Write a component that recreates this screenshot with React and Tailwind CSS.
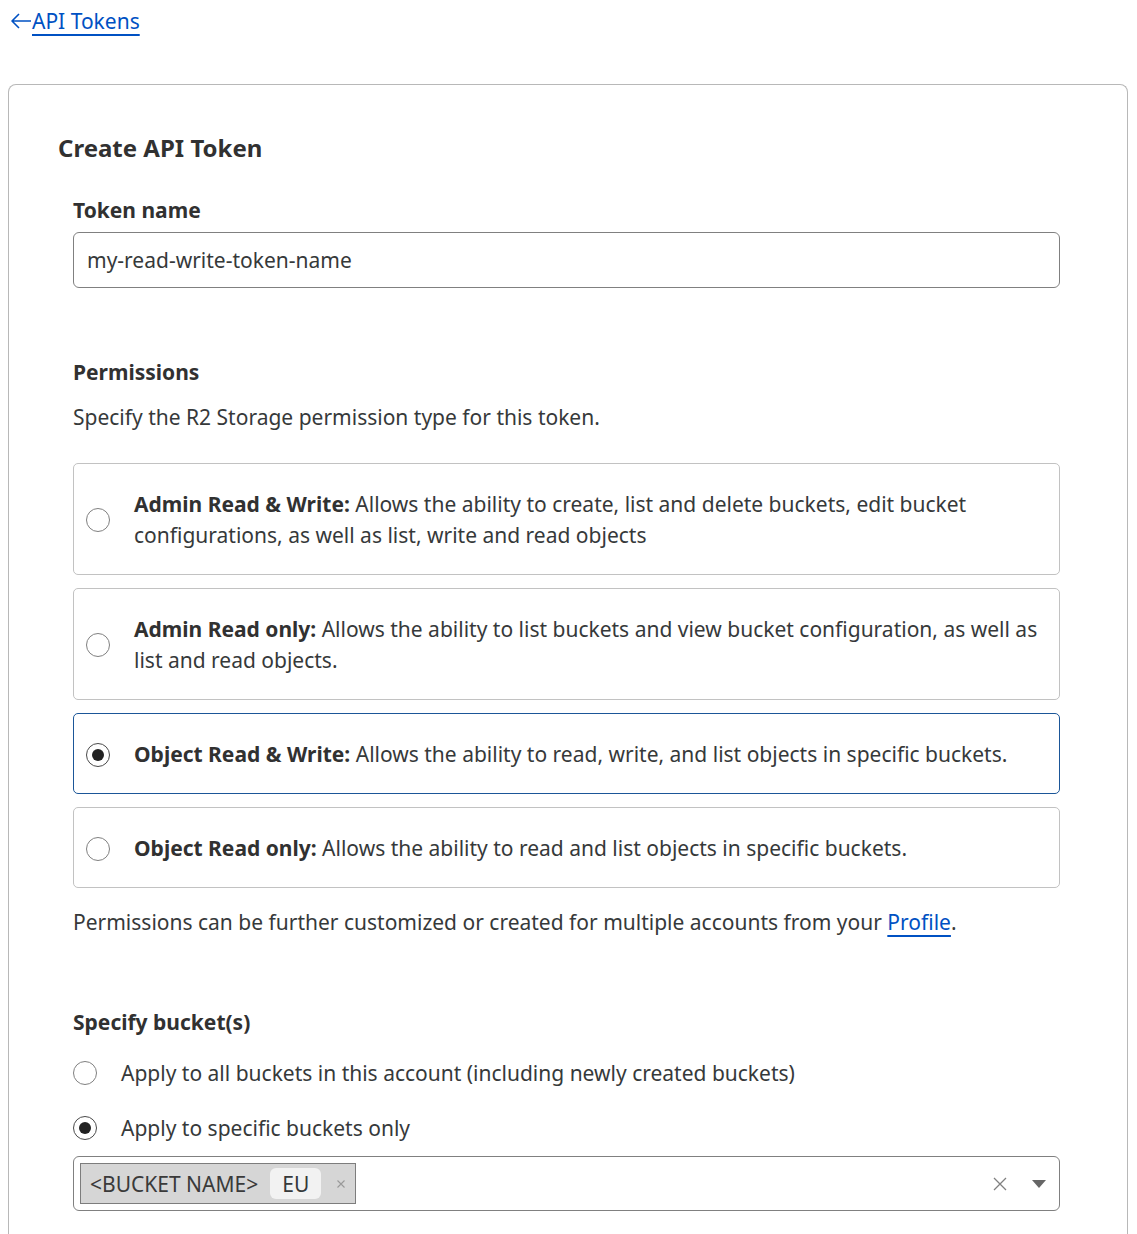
import React, { useState } from 'react'

const options = [
  { id: 'admin-rw', title: 'Admin Read & Write:', desc: 'Allows the ability to create, list and delete buckets, edit bucket configurations, as well as list, write and read objects' },
  { id: 'admin-r', title: 'Admin Read only:', desc: 'Allows the ability to list buckets and view bucket configuration, as well as list and read objects.' },
  { id: 'obj-rw', title: 'Object Read & Write:', desc: 'Allows the ability to read, write, and list objects in specific buckets.' },
  { id: 'obj-r', title: 'Object Read only:', desc: 'Allows the ability to read and list objects in specific buckets.' },
]

function Radio({ checked }) {
  return (
    <span
      className={`flex h-6 w-6 shrink-0 items-center justify-center rounded-full border bg-white
        ${checked ? 'border-[#4a4a4a]' : 'border-[#808080]'}`}
    >
      {checked && <span className="h-3 w-3 rounded-full bg-[#222]" />}
    </span>
  )
}

export default function App() {
  const [perm, setPerm] = useState('obj-rw')
  const [scope, setScope] = useState('specific')

  return (
    <div className="min-h-[1234px] bg-white text-[21px] text-[#36393a] font-['Noto_Sans',sans-serif]">
      {/* back link */}
      <div className="flex items-center pl-[10px] pt-[6px] leading-[30px]">
        <svg width="22" height="18" viewBox="0 0 22 18" fill="none" className="text-[#0051c3]">
          <path d="M21 9H2M9 2L2 9l7 7" stroke="currentColor" strokeWidth="1.6" strokeLinejoin="round" />
        </svg>
        <a href="#" className="text-[#0051c3] underline decoration-[1.5px] underline-offset-[5px]">API Tokens</a>
      </div>

      {/* card */}
      <div className="ml-[8px] mt-[48px] w-[1120px] rounded-t-[8px] border border-b-0 border-[#b8b8b8] pb-[23px] pl-[49px] pr-[67px] pt-[47px]">
        <h1 className="text-[24px] font-bold leading-[32px] text-[#313131]">Create API Token</h1>

        <div className="pl-[15px]">
          <label className="mt-[31px] block font-bold leading-[30px] text-[#313131]">Token name</label>
          <div className="mt-[7px] flex h-[56px] items-center rounded-[6px] border border-[#808080] px-[13px]">
            <span className="leading-[30px]">my-read-write-token-name</span>
          </div>

          <h2 className="mt-[69px] font-bold leading-[30px] text-[#313131]">Permissions</h2>
          <p className="mt-[15px] leading-[30px]">Specify the R2 Storage permission type for this token.</p>

          <div className="mt-[31px] flex flex-col gap-[13px]">
            {options.map(o => (
              <div
                key={o.id}
                onClick={() => setPerm(o.id)}
                className={`flex cursor-pointer items-center gap-6 rounded-[5px] border px-[12px] pb-[23px] pt-[25px]
                  ${perm === o.id ? 'border-[#1b5698]' : 'border-[#c2c2c2]'}`}
              >
                <Radio checked={perm === o.id} />
                <p className="leading-[31px]">
                  <span className="font-bold text-[#313131]">{o.title}</span> {o.desc}
                </p>
              </div>
            ))}
          </div>

          <p className="mt-[19px] leading-[30px]">
            Permissions can be further customized or created for multiple accounts from your{' '}
            <a href="#" className="text-[#0051c3] underline decoration-[1.5px] underline-offset-[5px]">Profile</a>.
          </p>

          <h2 className="mt-[70px] font-bold leading-[30px] text-[#313131]">Specify bucket(s)</h2>

          <div className="mt-[21px] flex flex-col gap-[25px]">
            <div className="flex cursor-pointer items-center gap-6 leading-[30px]" onClick={() => setScope('all')}>
              <Radio checked={scope === 'all'} />
              <span>Apply to all buckets in this account (including newly created buckets)</span>
            </div>
            <div className="flex cursor-pointer items-center gap-6 leading-[30px]" onClick={() => setScope('specific')}>
              <Radio checked={scope === 'specific'} />
              <span>Apply to specific buckets only</span>
            </div>
          </div>

          {/* bucket select */}
          <div className="mt-[13px] flex h-[55px] items-center rounded-[6px] border border-[#808080] pl-[6px] pr-[13px]">
            <div className="flex h-[41px] items-center border border-[#7d7d7d] bg-[#d6d6d6] pl-[9px] pr-[9px]">
              <span className="leading-[30px] text-[#3a3a3a]">&lt;BUCKET NAME&gt;</span>
              <span className="ml-[12px] flex h-[31px] w-[51px] items-center justify-center rounded-[6px] bg-[#f2f2f2] leading-[30px]">EU</span>
              <svg width="10" height="10" viewBox="0 0 10 10" className="ml-[15px] text-[#999]">
                <path d="M1.5 1.5l7 7M8.5 1.5l-7 7" stroke="currentColor" strokeWidth="1.1" />
              </svg>
            </div>
            <div className="flex-1" />
            <svg width="14" height="14" viewBox="0 0 14 14" className="text-[#808080]">
              <path d="M1 1l12 12M13 1L1 13" stroke="currentColor" strokeWidth="1.3" />
            </svg>
            <svg width="14" height="8" viewBox="0 0 14 8" className="ml-[25px] text-[#666]">
              <path d="M0 0h14L7 8z" fill="currentColor" />
            </svg>
          </div>
        </div>
      </div>
    </div>
  )
}
